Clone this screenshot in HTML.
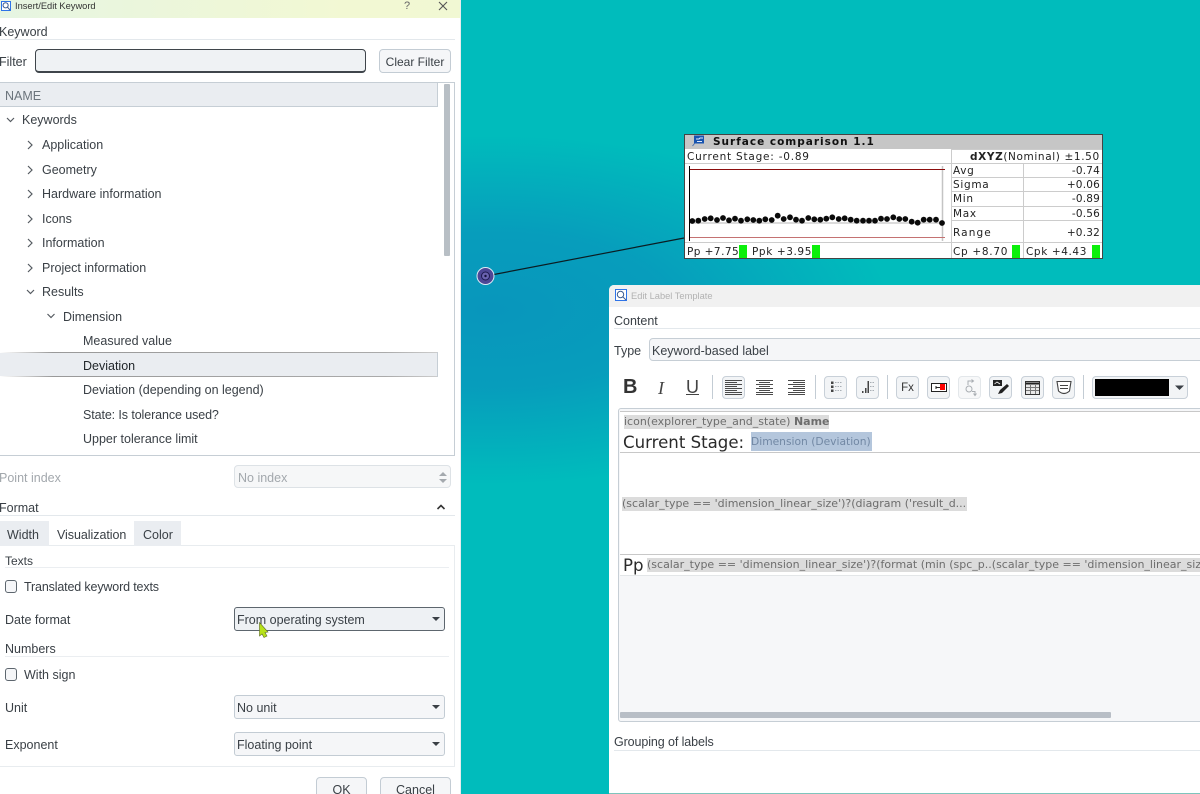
<!DOCTYPE html>
<html lang="en">
<head>
<meta charset="utf-8">
<title>Insert/Edit Keyword</title>
<style>
html,body{margin:0;padding:0;width:1200px;height:794px;overflow:hidden}
#root{position:relative;width:1200px;height:794px;overflow:hidden;background:#00bcbc;font-family:"Liberation Sans",sans-serif;font-size:12.5px;color:#3a4046}
.bg{position:absolute;left:461px;top:0;width:739px;height:794px;background:
 radial-gradient(ellipse 400px 175px at 30px 310px,rgba(8,150,188,1) 0,rgba(8,152,188,.85) 45%,rgba(6,160,188,0) 100%),
 #00bcbc}
.p{position:absolute;box-sizing:border-box}
.t{position:absolute;white-space:nowrap;line-height:16px;height:16px}
.hl{position:absolute;height:1px;background:#e3e8ec}
.btn{position:absolute;box-sizing:border-box;background:#f5f6f8;border:1px solid #c3ccd4;border-radius:4px;text-align:center}
.cb{position:absolute;box-sizing:border-box;background:#f5f6f8;border:1px solid #c3ccd4;border-radius:3px;height:24px;line-height:24px;padding-left:2px}
.cb:after{content:"";position:absolute;right:4px;top:9px;border:4px solid transparent;border-top:4px solid #3a4046;border-bottom:0;border-left-width:4.5px;border-right-width:4.5px}
.chk{position:absolute;box-sizing:border-box;width:12px;height:13px;background:#f5f6f8;border:1px solid #5d666e;border-radius:3px}
.dv{position:absolute;width:1px;height:24px;background:#c3ccd4;top:375px}
.tb{position:absolute;box-sizing:border-box;top:376px;width:23px;height:23px;background:#f2f4f6;border:1px solid #c8d0d8;border-radius:4px}
.d{font-family:"DejaVu Sans",sans-serif;font-size:10.5px;color:#222}
.s{letter-spacing:.7px}
.k{font-family:"DejaVu Sans",sans-serif;color:#6d6d6d;background:#dcdcdc;line-height:14px;height:14px;position:absolute;white-space:nowrap;overflow:hidden}
svg{position:absolute;left:0;top:0}
</style>
</head>
<body>
<div id="root">
<div class="bg"></div>

<!-- Left dialog -->
<div class="p" style="left:0;top:0;width:461px;height:794px;background:#fff;border-right:1px solid #e8ecef"></div>
<div class="p" style="left:0;top:0;width:460px;height:18px;background:linear-gradient(90deg,#e6f5e2,#f2f8d3 75%,#f1f8d3)"></div>
<div class="t" style="left:15px;top:-2px;font-size:9.3px;color:#333">Insert/Edit Keyword</div>
<div class="t" style="left:404px;top:-2px;font-size:11px;color:#666">?</div>

<div class="t" style="left:-1px;top:24px">Keyword</div>
<div class="hl" style="left:0;top:39px;width:455px"></div>
<div class="t" style="left:-1px;top:54px">Filter</div>
<div class="p" style="left:35px;top:49px;width:331px;height:24px;background:#eff2f4;border:1px solid #3f454b;border-bottom-width:2px;border-radius:4px"></div>
<div class="btn" style="left:379px;top:49px;width:72px;height:24px;line-height:24px;font-size:12px">Clear Filter</div>

<div class="p" style="left:-2px;top:82px;width:457px;height:374px;border:1px solid #c6ced5"></div>
<div class="p" style="left:0;top:83px;width:438px;height:24px;background:#eaedf1;border-right:1px solid #c6ced5;border-bottom:1px solid #c6ced5"></div>
<div class="t" style="left:5px;top:88px;color:#6b747c">NAME</div>
<div class="p" style="left:444px;top:84px;width:6px;height:172px;background:#b8bfc5;border-radius:1px"></div>

<div class="t" style="left:22px;top:112px">Keywords</div>
<div class="t" style="left:42px;top:137px">Application</div>
<div class="t" style="left:42px;top:162px">Geometry</div>
<div class="t" style="left:42px;top:186px">Hardware information</div>
<div class="t" style="left:42px;top:211px">Icons</div>
<div class="t" style="left:42px;top:235px">Information</div>
<div class="t" style="left:42px;top:260px">Project information</div>
<div class="t" style="left:42px;top:284px">Results</div>
<div class="t" style="left:63px;top:309px">Dimension</div>
<div class="t" style="left:83px;top:333px">Measured value</div>
<div class="p" style="left:0;top:352px;width:438px;height:25px;background:linear-gradient(90deg,#fff,#999 12%,#aaa 88%,#ccc) top/100% 1px no-repeat,linear-gradient(90deg,#fff,#999 12%,#aaa 88%,#ccc) bottom/100% 1px no-repeat,#eaedf1;border-right:1px solid #c6ced5"></div>
<div class="t" style="left:83px;top:358px;color:#22272b">Deviation</div>
<div class="t" style="left:83px;top:382px">Deviation (depending on legend)</div>
<div class="t" style="left:83px;top:407px;letter-spacing:-.1px">State: Is tolerance used?</div>
<div class="t" style="left:83px;top:431px">Upper tolerance limit</div>

<div class="t" style="left:-1px;top:470px;color:#a3a8ad">Point index</div>
<div class="p" style="left:234px;top:465px;width:217px;height:23px;background:#f6f7f8;border:1px solid #dde2e6;border-radius:4px"></div>
<div class="t" style="left:238px;top:470px;color:#a3a8ad">No index</div>

<div class="t" style="left:-1px;top:500px">Format</div>
<div class="hl" style="left:0;top:515px;width:455px"></div>
<div class="p" style="left:0;top:521px;width:49px;height:25px;background:#eaedf1"></div>
<div class="p" style="left:134px;top:521px;width:47px;height:25px;background:#eaedf1"></div>
<div class="t" style="left:7px;top:527px">Width</div>
<div class="t" style="left:57px;top:527px;letter-spacing:-.05px">Visualization</div>
<div class="t" style="left:143px;top:527px">Color</div>
<div class="p" style="left:-2px;top:545px;width:457px;height:222px;border:1px solid #e8ecef"></div>
<div class="p" style="left:0;top:544px;width:49px;height:2px;background:#eaedf1"></div>
<div class="p" style="left:134px;top:544px;width:47px;height:2px;background:#eaedf1"></div>

<div class="t" style="left:5px;top:553px;font-size:12px">Texts</div>
<div class="hl" style="left:5px;top:567px;width:444px;background:#ebeef1"></div>
<div class="chk" style="left:5px;top:580px"></div>
<div class="t" style="left:24px;top:579px;letter-spacing:-.15px">Translated keyword texts</div>
<div class="t" style="left:5px;top:612px">Date format</div>
<div class="cb" style="left:234px;top:607px;width:211px;border-color:#5d666e;background:#eef1f4">From operating system</div>

<div class="t" style="left:5px;top:641px">Numbers</div>
<div class="hl" style="left:5px;top:656px;width:444px;background:#ebeef1"></div>
<div class="chk" style="left:5px;top:668px"></div>
<div class="t" style="left:24px;top:667px">With sign</div>
<div class="t" style="left:5px;top:700px">Unit</div>
<div class="cb" style="left:234px;top:695px;width:211px">No unit</div>
<div class="t" style="left:5px;top:737px">Exponent</div>
<div class="cb" style="left:234px;top:732px;width:211px">Floating point</div>
<div class="btn" style="left:316px;top:777px;width:51px;height:30px;line-height:24px">OK</div>
<div class="btn" style="left:380px;top:777px;width:71px;height:30px;line-height:24px">Cancel</div>

<!-- Chart base -->
<div class="p" style="left:684px;top:134px;width:419px;height:125px;background:#fff;border:1px solid #444"></div>
<div class="p" style="left:685px;top:135px;width:417px;height:14px;background:#c6c6c6"></div>
<div class="t d" style="left:713px;top:134px;font-weight:bold;letter-spacing:1px;font-size:10.5px;color:#111">Surface comparison 1.1</div>
<div class="t d" style="left:687px;top:149px;letter-spacing:.78px">Current Stage: -0.89</div>
<div class="t d" style="left:970px;top:149px;letter-spacing:.62px"><b>dXYZ</b>(Nominal) ±1.50</div>
<div class="t d s" style="left:953px;top:163px">Avg</div>
<div class="t d" style="right:100px;top:163px;letter-spacing:.2px">-0.74</div>
<div class="t d s" style="left:953px;top:177px">Sigma</div>
<div class="t d" style="right:100px;top:177px;letter-spacing:.2px">+0.06</div>
<div class="t d s" style="left:953px;top:191px">Min</div>
<div class="t d" style="right:100px;top:191px;letter-spacing:.2px">-0.89</div>
<div class="t d s" style="left:953px;top:206px">Max</div>
<div class="t d" style="right:100px;top:206px;letter-spacing:.2px">-0.56</div>
<div class="t d" style="left:953px;top:225px;letter-spacing:1.1px">Range</div>
<div class="t d" style="right:100px;top:225px;letter-spacing:.2px">+0.32</div>
<div class="t d" style="left:687px;top:244px;letter-spacing:.45px">Pp +7.75</div>
<div class="p" style="left:739px;top:245px;width:8px;height:13px;background:#0bf00b"></div>
<div class="t d" style="left:752px;top:244px;letter-spacing:.6px">Ppk +3.95</div>
<div class="p" style="left:812px;top:245px;width:8px;height:13px;background:#0bf00b"></div>
<div class="t d" style="left:953px;top:244px;letter-spacing:.7px">Cp +8.70</div>
<div class="p" style="left:1012px;top:245px;width:8px;height:13px;background:#0bf00b"></div>
<div class="t d" style="left:1026px;top:244px;letter-spacing:.6px">Cpk +4.43</div>
<div class="p" style="left:1092px;top:245px;width:8px;height:13px;background:#0bf00b"></div>

<!-- Edit Label Template dialog -->
<div class="p" style="left:609px;top:285px;width:591px;height:509px;background:#fff;border-radius:5px 0 0 0;border-bottom:1px solid #7ec4bc"></div>
<div class="p" style="left:609px;top:285px;width:591px;height:22px;background:#f1f1f1;border-radius:5px 0 0 0"></div>
<div class="t" style="left:631px;top:288px;font-size:9.3px;color:#b2b2b2">Edit Label Template</div>
<div class="t" style="left:614px;top:313px">Content</div>
<div class="hl" style="left:614px;top:328px;width:586px"></div>
<div class="t" style="left:614px;top:343px">Type</div>
<div class="p" style="left:649px;top:338px;width:560px;height:23px;background:#f5f6f8;border:1px solid #c6ced5;border-radius:4px"></div>
<div class="t" style="left:652px;top:343px">Keyword-based label</div>

<div class="t" style="left:623px;top:378px;font-size:20px;line-height:18px;font-weight:bold;color:#333">B</div>
<div class="t" style="left:658px;top:379px;font-size:18px;line-height:18px;font-style:italic;font-family:'Liberation Serif',serif;color:#444">I</div>
<div class="t" style="left:686px;top:378px;font-size:18px;line-height:18px;color:#444;text-decoration:underline">U</div>
<div class="dv" style="left:712px"></div>
<div class="tb" style="left:722px"></div>
<div class="dv" style="left:815px"></div>
<div class="tb" style="left:824px"></div>
<div class="tb" style="left:856px"></div>
<div class="dv" style="left:887px"></div>
<div class="tb" style="left:896px;text-align:center;line-height:22px;font-size:11.5px;color:#333">Fx</div>
<div class="tb" style="left:927px"></div>
<div class="tb" style="left:958px;border-color:#e3e7ea;background:#f7f8f9"></div>
<div class="tb" style="left:989px"></div>
<div class="tb" style="left:1021px"></div>
<div class="tb" style="left:1052px"></div>
<div class="dv" style="left:1083px"></div>
<div class="p" style="left:1092px;top:376px;width:96px;height:23px;background:#f2f4f6;border:1px solid #c8d0d8;border-radius:4px"></div>
<div class="p" style="left:1095px;top:379px;width:74px;height:17px;background:#000"></div>

<div class="p" style="left:618px;top:408px;width:592px;height:314px;background:#f6f7f9;border:1px solid #c6ced5;border-radius:3px"></div>
<div class="p" style="left:620px;top:411px;width:580px;height:164px;background:#fff;border-top:1px solid #c8c8c8"></div>
<div class="p" style="left:620px;top:452px;width:580px;height:1px;background:#c8c8c8"></div>
<div class="p" style="left:620px;top:554px;width:580px;height:1px;background:#c8c8c8"></div>
<div class="p" style="left:620px;top:575px;width:580px;height:1px;background:#e3e6e8"></div>
<div class="k" style="left:624px;top:415px;font-size:11px;width:205px">icon(explorer_type_and_state) <b>Name</b></div>
<div class="t" style="left:623px;top:434px;font-size:16.6px;line-height:18px;height:18px;font-family:'DejaVu Sans',sans-serif;color:#2a2a2a">Current Stage:</div>
<div class="k" style="left:751px;top:432px;width:121px;height:19px;line-height:19px;font-size:10.7px;background:#b4c6dc;color:#7288a4">Dimension (Deviation)</div>
<div class="k" style="left:622px;top:497px;width:345px;font-size:11px">(scalar_type == 'dimension_linear_size')?(diagram ('result_d...</div>
<div class="t" style="left:623px;top:557px;font-size:16.6px;line-height:18px;height:18px;font-family:'DejaVu Sans',sans-serif;color:#2a2a2a">Pp</div>
<div class="k" style="left:647px;top:558px;width:553px;font-size:11px">(scalar_type == 'dimension_linear_size')?(format (min (spc_p..(scalar_type == 'dimension_linear_size')?</div>
<div class="p" style="left:620px;top:712px;width:491px;height:6px;background:#b8bec6;border-radius:1px"></div>
<div class="t" style="left:614px;top:734px;letter-spacing:-.1px">Grouping of labels</div>
<div class="hl" style="left:614px;top:750px;width:586px"></div>

<svg width="1200" height="794" viewBox="0 0 1200 794" fill="none">
  <!-- window controls and dialog icons -->
  <rect x="1.5" y="1.5" width="9" height="9" fill="#fff" stroke="#2f74e8"/>
  <circle cx="5.6" cy="5.3" r="2.6" stroke="#3b5c90"/><path d="M7.5 7.2L10 10" stroke="#3b5c90"/>
  <path d="M439 2L447 10M447 2L439 10" stroke="#555" stroke-width="1.1"/>
  <rect x="615.5" y="289.5" width="11" height="11" fill="#fff" stroke="#2f74e8"/>
  <circle cx="620.5" cy="294.5" r="3.2" stroke="#3b5c90"/><path d="M622.8 296.8L626 300" stroke="#3b5c90"/>

  <!-- tree chevrons -->
  <g stroke="#555b61" stroke-width="1.2">
    <path d="M7 118L10.500 121.500L14 118"/>
    <path d="M28 141L32 145L28 149"/>
    <path d="M28 166L32 170L28 174"/>
    <path d="M28 190L32 194L28 198"/>
    <path d="M28 215L32 219L28 223"/>
    <path d="M28 239L32 243L28 247"/>
    <path d="M28 264L32 268L28 272"/>
    <path d="M27 290L30.500 293.500L34 290"/>
    <path d="M47.500 314L51 317.500L54.500 314"/>
  </g>
  <path d="M437.500 509L441 505.500L444.500 509" stroke="#333" stroke-width="1.6"/>
  <path d="M439 476H447L443 472Z M439 479H447L443 483Z" fill="#a4a9ae"/>

  <!-- cursor -->
  <path d="M259.500 622.500V636L262 634L264 637.500L267 636L265 632.500L268 632Z" fill="#b7e21a" stroke="#5a6a20" stroke-width=".6"/>

  <!-- leader and marker -->
  <path d="M486 276L684 238" stroke="#0b1c22" stroke-width="1.2"/>
  <circle cx="485.500" cy="276" r="8.500" fill="#4d4796" stroke="#dbe9f4" stroke-width="1"/>
  <circle cx="485.500" cy="276" r="4" fill="#6a63b0" stroke="#1d1a50" stroke-width="1"/>
  <circle cx="485.500" cy="276" r="1.200" fill="#14123c"/>

  <!-- surface comparison title icon -->
  <rect x="694" y="135.500" width="10" height="8" fill="#1854b0"/>
  <path d="M696 139H699L700 138H703M697 141.500H702" stroke="#dfe9fa"/>
  <path d="M692.500 146L694.500 143.500" stroke="#4a70b0"/>

  <!-- surface comparison grid -->
  <g stroke="#cccccc" stroke-width="1" shape-rendering="crispEdges">
    <path d="M685 163.500H1102"/>
    <path d="M685 242.500H1102"/>
    <path d="M951 149.500H1102"/>
    <path d="M951.500 149V258"/>
    <path d="M1023.500 163V258"/>
    <path d="M951 177.500H1102M951 191.500H1102M951 206.500H1102M951 220.500H1102"/>
  </g>
  <path d="M689.500 166V241" stroke="#000" stroke-width="1" shape-rendering="crispEdges"/>
  <path d="M942.500 166V241" stroke="#c4c4c4" stroke-width="1.500"/>
  <path d="M690 169.500H945" stroke="#8b0d0d" stroke-width="1" shape-rendering="crispEdges"/>
  <path d="M690 237.500H945" stroke="#c47272" stroke-width="1" shape-rendering="crispEdges"/>
  <path d="M690 223H943" stroke="#cfcfcf" stroke-width="1.500"/>
  <g fill="#0a0a0a">
    <circle cx="692.300" cy="221" r="2.900"/><circle cx="698.300" cy="220.700" r="2.900"/><circle cx="704.700" cy="219" r="2.900"/><circle cx="710.700" cy="218.300" r="2.900"/><circle cx="717" cy="220" r="2.900"/><circle cx="723" cy="218" r="2.900"/><circle cx="729" cy="220.300" r="2.900"/><circle cx="735" cy="218.700" r="2.900"/><circle cx="741" cy="220.700" r="2.900"/><circle cx="747.300" cy="219.300" r="2.900"/><circle cx="753.300" cy="220" r="2.900"/><circle cx="759.300" cy="220.700" r="2.900"/><circle cx="765.300" cy="219.300" r="2.900"/><circle cx="771.700" cy="220" r="2.900"/><circle cx="777.700" cy="215.700" r="2.900"/><circle cx="783.700" cy="219" r="2.900"/><circle cx="790" cy="217.300" r="2.900"/><circle cx="796" cy="219.700" r="2.900"/><circle cx="802" cy="220.700" r="2.900"/><circle cx="808.300" cy="218" r="2.900"/><circle cx="814.300" cy="219.300" r="2.900"/><circle cx="820.300" cy="219.700" r="2.900"/><circle cx="826.300" cy="218.700" r="2.900"/><circle cx="832.300" cy="217.300" r="2.900"/><circle cx="838.700" cy="219" r="2.900"/><circle cx="844.700" cy="218.300" r="2.900"/><circle cx="850.700" cy="219.700" r="2.900"/><circle cx="856.700" cy="220.700" r="2.900"/><circle cx="863" cy="220.700" r="2.900"/><circle cx="869" cy="220.700" r="2.900"/><circle cx="875" cy="220.700" r="2.900"/><circle cx="881" cy="218.700" r="2.900"/><circle cx="887" cy="219" r="2.900"/><circle cx="893.300" cy="217.300" r="2.900"/><circle cx="899.300" cy="219" r="2.900"/><circle cx="905.300" cy="219" r="2.900"/><circle cx="911.700" cy="221.700" r="2.900"/><circle cx="917.700" cy="222.700" r="2.900"/><circle cx="923.700" cy="219.700" r="2.900"/><circle cx="929.700" cy="219.700" r="2.900"/><circle cx="936" cy="219.700" r="2.900"/><circle cx="942" cy="223" r="2.900"/>
  </g>

  <!-- toolbar icons -->
  <g stroke="#4a4a4a" stroke-width="1.100" shape-rendering="crispEdges">
    <path d="M725 380.500H742M725 382.500H737M725 384.500H742M725 386.500H737M725 388.500H742M725 390.500H737M725 392.500H742M725 394.500H742"/>
    <path d="M756 380.500H773M759 382.500H770M756 384.500H773M759 386.500H770M756 388.500H773M759 390.500H770M756 392.500H773M756 394.500H773"/>
    <path d="M788 380.500H805M793 382.500H805M788 384.500H805M793 386.500H805M788 388.500H805M793 390.500H805M788 392.500H805M788 394.500H805"/>
  </g>
  <g fill="#444">
    <rect x="831" y="381.500" width="2.500" height="2.500"/><rect x="831" y="385.500" width="2.500" height="2.500"/><rect x="831" y="389.500" width="2.500" height="2.500"/>
    <rect x="862" y="391" width="1.500" height="2"/><rect x="865" y="388" width="1.500" height="5"/><rect x="867.500" y="381" width="1.500" height="12"/>
  </g>
  <g stroke="#a8aeb4" stroke-dasharray="1.500 1">
    <path d="M835 382.500H842M835 386.500H842M835 390.500H842"/>
    <path d="M870 382.500H875M870 386.500H875M870 390.500H875"/>
  </g>
  <rect x="931.500" y="383.500" width="15" height="8" fill="#fff" stroke="#222"/>
  <path d="M936 386V389M936 387.500H940" stroke="#222"/><rect x="940" y="384" width="5" height="6" fill="#f00"/>
  <g stroke="#a9aeb3" stroke-width="1">
    <circle cx="969" cy="389" r="3"/><path d="M968 385V381H973M971.500 379.500L973.500 381L971.500 382.500M972 391.500H975V395M973.500 393.500L975 395.500L976.500 393.500"/>
  </g>
  <rect x="993" y="380" width="9" height="6" fill="#222"/><path d="M994.500 384L997 382L1000 384" stroke="#fff" stroke-width=".8"/>
  <path d="M998 394L1000 390L1007 384L1009 386L1002 393Z" fill="#222"/>
  <rect x="1025.500" y="381.500" width="14" height="13" fill="#e8e8e8" stroke="#333"/>
  <path d="M1026 383.500H1039" stroke="#222" stroke-width="2"/>
  <path d="M1026 387.500H1039M1026 390.500H1039M1030.500 385V394M1035.500 385V394" stroke="#777"/>
  <path d="M1057 381.500H1071L1069.500 391Q1064 396 1058.500 391Z" fill="#fff" stroke="#444" stroke-width="1.100"/>
  <path d="M1060 385.500H1068M1060 388.500H1068" stroke="#444"/>
  <path d="M1175 385.500H1184L1179.500 390Z" fill="#3a4046"/>
</svg>
</div>
</body>
</html>
